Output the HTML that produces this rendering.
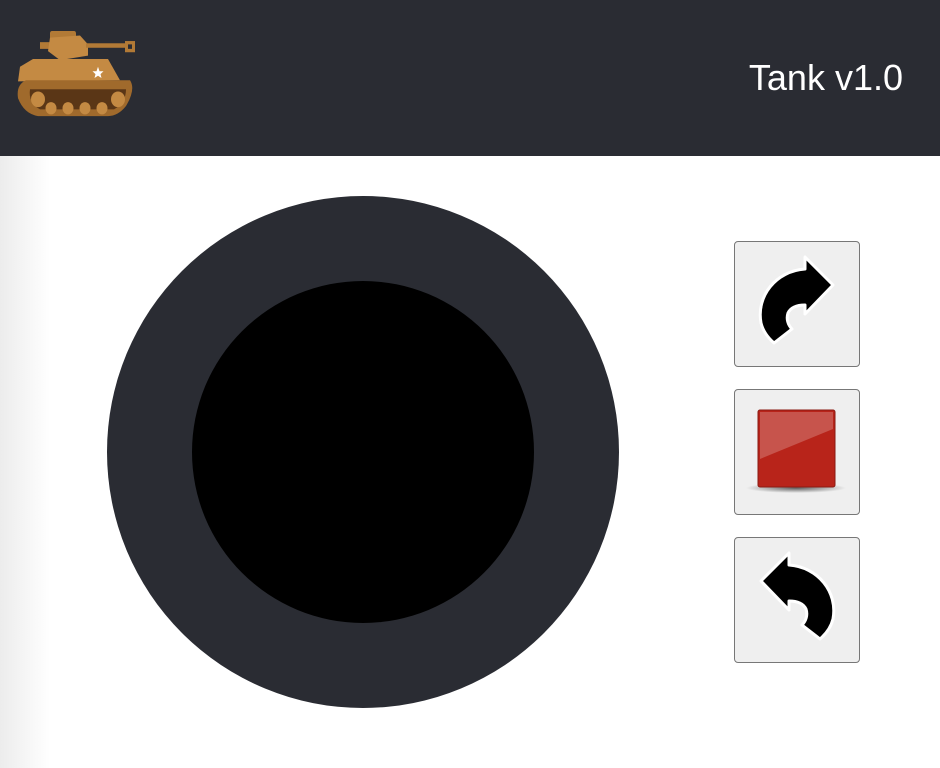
<!DOCTYPE html>
<html><head><meta charset="utf-8"><style>
html,body{margin:0;padding:0;width:940px;height:768px;overflow:hidden;background:#fff;font-family:"Liberation Sans",sans-serif}
.hdr{position:absolute;left:0;top:0;width:940px;height:156px;background:#2a2c33}
.title{position:absolute;right:37px;top:57px;color:#fff;font-size:36px}
.shade{position:absolute;left:0;top:156px;width:50px;height:612px;background:linear-gradient(to right,#ececec,#fff)}
.outer{position:absolute;left:107px;top:196px;width:512px;height:512px;border-radius:50%;background:#2a2c33}
.inner{position:absolute;left:192px;top:281px;width:342px;height:342px;border-radius:50%;background:#000}
.btn{position:absolute;left:734px;width:124px;height:124px;border:1px solid #777;border-radius:4px;background:#efefef}
.btn svg{position:absolute;left:-1px;top:-1px}
</style></head><body>
<div class="hdr">
<svg width="140" height="112" style="position:absolute;left:8px;top:22px" viewBox="0 0 140 100" preserveAspectRatio="none">
<rect x="32" y="18" width="15" height="6" fill="#b27a36"/>
<rect x="42" y="8" width="26" height="8" rx="2" fill="#b27a36"/>
<path d="M42 14 L72 12 L80 20 L80 30 L52 34 L40 26 Z" fill="#c48a43"/>
<rect x="78" y="19" width="40" height="4" fill="#b27a36"/>
<rect x="117" y="17" width="10" height="10" fill="#b27a36"/><rect x="120" y="20" width="4" height="4" fill="#2a2c33"/>
<path d="M12 40 L25 33 L100 33 L112 52 L10 53 Z" fill="#c48a43"/>
<path d="M18 52 L122 52 Q128 60 118 75 Q110 84 100 84 L30 84 Q16 82 10 68 Q8 56 18 52Z" fill="#a06a2c"/>
<path d="M22 60 L118 60 Q118 72 106 78 L32 78 Q20 72 22 60Z" fill="#5a3616"/>
<circle cx="30" cy="69" r="7" fill="#c48a43"/><circle cx="110" cy="69" r="7" fill="#c48a43"/>
<circle cx="43" cy="77" r="5.5" fill="#c48a43"/><circle cx="60" cy="77" r="5.5" fill="#c48a43"/><circle cx="77" cy="77" r="5.5" fill="#c48a43"/><circle cx="94" cy="77" r="5.5" fill="#c48a43"/>
<path d="M90 40 L91.5 44 L95.5 44 L92.5 46.5 L93.5 50 L90 48 L86.5 50 L87.5 46.5 L84.5 44 L88.5 44 Z" fill="#fff"/>
</svg>
<div class="title">Tank v1.0</div>
</div>
<div class="shade"></div>
<div class="outer"></div><div class="inner"></div>
<div class="btn" style="top:241px"><svg width="126" height="126"><path d="M99,44 L71,16 L71,28 C42,30 22,55 27,82 C29,90 33,96 40,102 L58,88 C54,84 52,78 54,72 C57,66 63,64 71,64 L71,73 Z" fill="#000" stroke="#fff" stroke-width="3" stroke-linejoin="round"/></svg></div>
<div class="btn" style="top:389px"><svg width="126" height="126">
<defs><radialGradient id="sh" cx="50%" cy="50%" r="50%"><stop offset="0" stop-color="#000" stop-opacity=".6"/><stop offset="1" stop-color="#000" stop-opacity="0"/></radialGradient></defs>
<ellipse cx="62" cy="99" rx="50" ry="5" fill="url(#sh)"/>
<rect x="24" y="21" width="77" height="77" rx="2" fill="#b8241a" stroke="#8a1a12"/>
<path d="M26 23 L99 23 L99 40 L26 70 Z" fill="#fff" opacity=".22"/>
</svg></div>
<div class="btn" style="top:537px"><svg width="126" height="126"><g transform="translate(126,0) scale(-1,1)"><path d="M99,44 L71,16 L71,28 C42,30 22,55 27,82 C29,90 33,96 40,102 L58,88 C54,84 52,78 54,72 C57,66 63,64 71,64 L71,73 Z" fill="#000" stroke="#fff" stroke-width="3" stroke-linejoin="round"/></g></svg></div>
</body></html>
